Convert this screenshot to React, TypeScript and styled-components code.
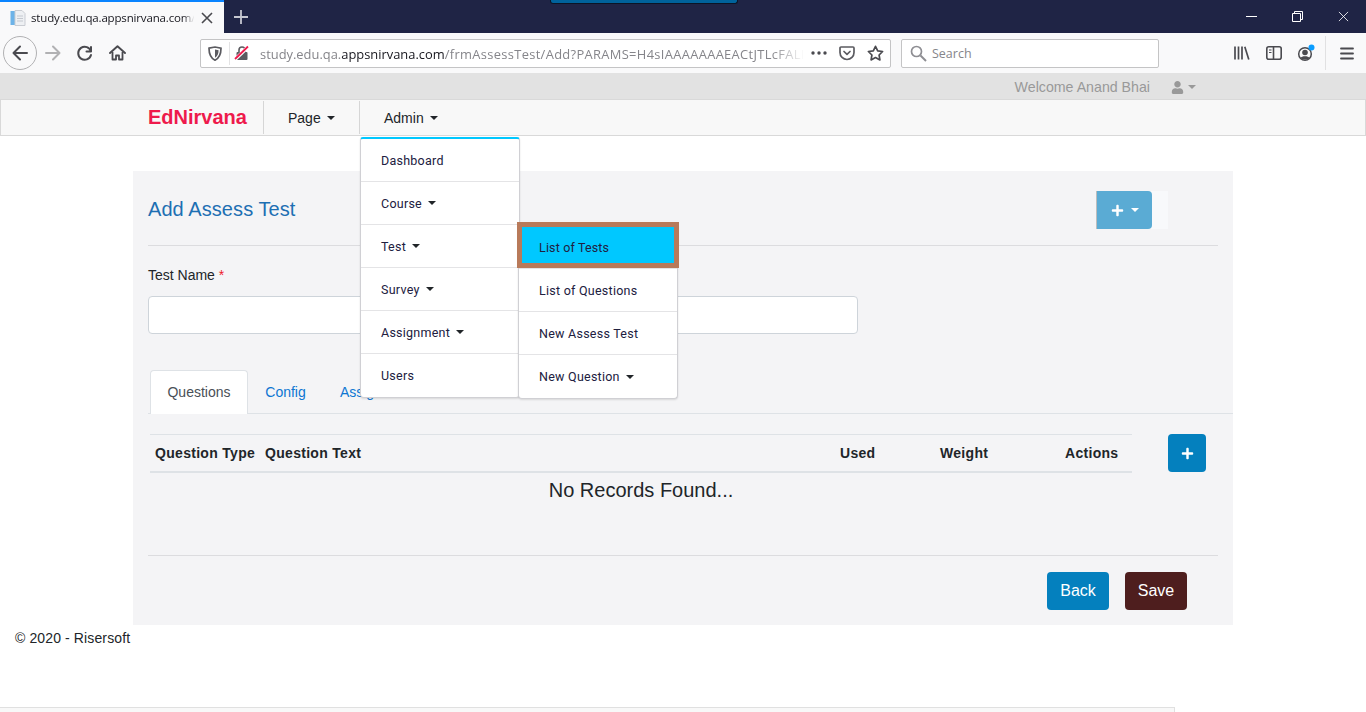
import React from 'react'
import styled, { createGlobalStyle } from 'styled-components'
import { FaPlus, FaUser } from 'react-icons/fa'

const GlobalStyle = createGlobalStyle`
  html, body {
    margin: 0;
    padding: 0;
    background: #fff;
    overflow: hidden;
  }
  body {
    font-family: "Liberation Sans", Arial, sans-serif;
    font-size: 14px;
    color: #212529;
  }
  * {
    box-sizing: border-box;
  }
`

const Page = styled.div`
  width: 1366px;
  height: 712px;
  position: relative;
  overflow: hidden;
`

/* browser chrome */
const TabStrip = styled.div`
  height: 33px;
  background: #1f2445;
  display: flex;
  position: relative;
`

const ShareBar = styled.div`
  position: absolute;
  left: 550px;
  top: 0;
  width: 188px;
  height: 4px;
  background: #00629b;
  border: 1px solid #0b1526;
  border-top: 0;
  border-radius: 0 0 3px 3px;
`

const ActiveTab = styled.div`
  width: 224px;
  background: #f9f9fa;
  border-top: 2px solid #0a84ff;
  display: flex;
  align-items: center;
  padding-left: 10px;
  gap: 5px;
`

const TabTitle = styled.span`
  font-family: "Open Sans", sans-serif;
  font-size: 11.5px;
  letter-spacing: -0.16px;
  color: #16161d;
  width: 165px;
  white-space: nowrap;
  overflow: hidden;
  -webkit-mask-image: linear-gradient(90deg, #000 92%, transparent 99%);
  mask-image: linear-gradient(90deg, #000 92%, transparent 99%);
`

const NewTab = styled.div`
  width: 34px;
  display: flex;
  align-items: center;
  justify-content: center;
`

const WindowControls = styled.div`
  margin-left: auto;
  display: flex;
`

const WindowButton = styled.div`
  width: 46px;
  display: flex;
  align-items: center;
  justify-content: center;
`

const Toolbar = styled.div`
  height: 40px;
  background: #f9f9fa;
  display: flex;
  align-items: center;
  padding-left: 3px;
`

const BackCircle = styled.div`
  width: 34px;
  height: 34px;
  border: 1px solid #b1b1b3;
  border-radius: 50%;
  background: #f9f9fa;
  display: flex;
  align-items: center;
  justify-content: center;
`

const ToolButton = styled.div<{ $w?: number }>`
  width: ${(p) => p.$w ?? 32}px;
  height: 32px;
  display: flex;
  align-items: center;
  justify-content: center;
  flex: none;
`

const UrlBar = styled.div`
  width: 691px;
  height: 29px;
  margin-left: 67px;
  background: #fff;
  border: 1px solid #c4c4c5;
  border-radius: 2px;
  display: flex;
  align-items: center;
  flex: none;
`

const UrlDivider = styled.div`
  width: 1px;
  height: 23px;
  background: #e3e3e4;
`

const UrlText = styled.div`
  width: 546px;
  margin-left: 7px;
  padding-top: 1px;
  font-family: "Open Sans", sans-serif;
  font-size: 12.9px;
  white-space: nowrap;
  overflow: hidden;
  color: #85858a;
  -webkit-mask-image: linear-gradient(90deg, #000 94%, transparent);
  mask-image: linear-gradient(90deg, #000 94%, transparent);
`

const UrlHost = styled.span`
  color: #16161d;
`

const UrlPath = styled.span`
  letter-spacing: 0.33px;
`

const SearchBox = styled.div`
  width: 258px;
  height: 29px;
  margin-left: 10px;
  padding: 1px 0 0 8px;
  background: #fff;
  border: 1px solid #c4c4c5;
  border-radius: 2px;
  display: flex;
  align-items: center;
  gap: 5px;
  font-family: "Open Sans", sans-serif;
  font-size: 12.5px;
  color: #85858a;
  flex: none;
`

const ToolGroup = styled.div`
  margin-left: 67px;
  display: flex;
  align-items: center;
`

const ToolDivider = styled.div`
  width: 1px;
  height: 34px;
  background: #e1e1e2;
  margin: 0 5px 0 3px;
`

/* app header */
const WelcomeStrip = styled.div`
  height: 26px;
  padding: 2px 170px 0 0;
  background: #e2e2e2;
  display: flex;
  align-items: center;
  justify-content: flex-end;
  color: #999;
  font-size: 14.2px;
`

const UserMenu = styled.div`
  margin-left: 21px;
  display: flex;
  align-items: center;
  gap: 4px;
  width: 25px;
`

const SmallCaret = styled.span<{ $color?: string }>`
  display: inline-block;
  width: 0;
  height: 0;
  border-left: 4px solid transparent;
  border-right: 4px solid transparent;
  border-top: 4px solid ${(p) => p.$color ?? '#212529'};
`

const Navbar = styled.div`
  height: 37px;
  background: #f8f8f8;
  border: 1px solid #d9d9d9;
  display: flex;
  align-items: stretch;
  padding-left: 147px;
  position: relative;
  z-index: 5;
`

const Brand = styled.div`
  width: 116px;
  display: flex;
  align-items: center;
  font-size: 20px;
  font-weight: 700;
  color: #ee1a4c;
  border-right: 1px solid #d6d6d6;
  margin: 1px 0;
`

const NavItem = styled.div<{ $w: number; $divider?: boolean }>`
  width: ${(p) => p.$w}px;
  padding-left: 24px;
  display: flex;
  align-items: center;
  gap: 6px;
  font-size: 14px;
  color: #212529;
  margin: 1px 0;
  border-right: ${(p) => (p.$divider ? '1px solid #d6d6d6' : 'none')};
`

/* menus */
const Menu = styled.div<{ $left: number; $top: number; $accent?: boolean }>`
  position: absolute;
  left: ${(p) => p.$left}px;
  top: ${(p) => p.$top}px;
  width: 160px;
  background: #fff;
  border: 1px solid #d0d0d4;
  border-top: ${(p) => (p.$accent ? '2px solid #00c8ff' : '1px solid #e4e4e6')};
  border-radius: ${(p) => (p.$accent ? '3px 3px 4px 4px' : '0 0 4px 4px')};
  box-shadow: 0 1px 2px rgba(0, 0, 0, 0.12);
  z-index: ${(p) => (p.$accent ? 6 : 7)};
`

const MenuItem = styled.div<{ $last?: boolean }>`
  height: 43px;
  padding-left: 20px;
  display: flex;
  align-items: center;
  gap: 6px;
  font-family: Roboto, sans-serif;
  font-size: 12.5px;
  letter-spacing: 0.25px;
  color: #212040;
  border-bottom: ${(p) => (p.$last ? 'none' : '1px solid #e4e4e6')};
`

const HighlightItem = styled.div`
  position: absolute;
  left: -2px;
  top: -4px;
  width: 162px;
  height: 46px;
  padding: 4px 0 0 17px;
  display: flex;
  align-items: center;
  background: #00c8ff;
  border: 5px solid #b87a5a;
  font-family: Roboto, sans-serif;
  font-size: 12.5px;
  letter-spacing: 0.15px;
  color: #212040;
`

/* page */
const Main = styled.main`
  margin: 35px 0 0 133px;
  width: 1100px;
  height: 454px;
  background: #f4f4f6;
  padding-left: 15px;
  display: flex;
  flex-direction: column;
`

const CardHeader = styled.div`
  width: 1070px;
  height: 75px;
  border-bottom: 1px solid #dcdcdf;
  display: flex;
  align-items: flex-start;
  justify-content: space-between;
`

const Title = styled.h2`
  margin: 25px 0 0;
  font-size: 20px;
  line-height: 26px;
  letter-spacing: 0.07px;
  font-weight: 400;
  color: #1d6fb3;
`

const AddGroup = styled.div`
  margin: 20px 50px 0 0;
  width: 72px;
  height: 38px;
  background: #f8f9fb;
`

const AddDropdown = styled.button`
  width: 56px;
  height: 38px;
  padding: 0 0 0 14px;
  background: #5aabd4;
  border: 0;
  border-left: 1px solid #bdbdbd;
  border-radius: 0 4px 4px 0;
  display: flex;
  align-items: center;
  gap: 7px;
  color: #fff;
`

const Label = styled.label`
  display: block;
  margin-top: 21px;
  height: 16px;
  line-height: 16px;
  font-size: 14px;
  color: #212529;
`

const Required = styled.span`
  color: #ee1a2c;
`

const TextInput = styled.input`
  display: block;
  margin-top: 13px;
  width: 710px;
  height: 38px;
  background: #fff;
  border: 1px solid #ced4da;
  border-radius: 4px;
`

const Tabs = styled.div`
  margin: 36px 0 0;
  width: 1085px;
  height: 44px;
  padding-left: 2px;
  display: flex;
  border-bottom: 1px solid #dee2e6;
`

const Tab = styled.div<{ $active?: boolean; $w: number }>`
  width: ${(p) => p.$w}px;
  height: 44px;
  padding-bottom: 2px;
  display: flex;
  align-items: center;
  justify-content: center;
  font-size: 14px;
  color: ${(p) => (p.$active ? '#495057' : '#0d76d2')};
  background: ${(p) => (p.$active ? '#fff' : 'transparent')};
  border: 1px solid ${(p) => (p.$active ? '#dee2e6' : 'transparent')};
  border-bottom: 0;
  border-radius: 4px 4px 0 0;
`

const TableRow = styled.div`
  margin-top: 20px;
  display: flex;
  align-items: flex-start;
  padding-left: 2px;
`

const TableBox = styled.div`
  width: 982px;
`

const HeadRow = styled.div`
  height: 39px;
  border-top: 1px solid #dee2e6;
  border-bottom: 2px solid #dee2e6;
  display: grid;
  grid-template-columns: 110px 575px 100px 125px 1fr;
  align-items: center;
  padding-left: 5px;
  font-size: 14px;
  font-weight: 700;
  letter-spacing: 0.3px;
  color: #212529;
`

const EmptyText = styled.div`
  margin-top: 5px;
  width: 982px;
  text-align: center;
  font-size: 20px;
  line-height: 24px;
  color: #212529;
`

const IconButton = styled.button`
  margin-left: 36px;
  width: 38px;
  height: 38px;
  padding: 0;
  background: #0480be;
  border: 0;
  border-radius: 4px;
  color: #fff;
  display: flex;
  align-items: center;
  justify-content: center;
`

const CardFooter = styled.div`
  width: 1070px;
  margin-top: 53px;
  border-top: 1px solid #dcdcdf;
  padding: 16px 31px 0 0;
  display: flex;
  justify-content: flex-end;
  gap: 16px;
`

const ActionButton = styled.button<{ $bg: string }>`
  width: 62px;
  height: 38px;
  padding: 0;
  border: 0;
  border-radius: 4px;
  background: ${(p) => p.$bg};
  color: #fff;
  font-family: "Liberation Sans", Arial, sans-serif;
  font-size: 16px;
`

const Footer = styled.footer`
  padding: 5px 0 0 15px;
  line-height: 16px;
  font-size: 14px;
  letter-spacing: 0.12px;
  color: #212529;
`

const BottomPanel = styled.div`
  position: absolute;
  left: 0;
  bottom: 0;
  width: 1175px;
  height: 5px;
  background: #f8f8f8;
  border-top: 1px solid #e0e0e0;
  border-right: 1px solid #e0e0e0;
`

const Favicon = () => (
  <svg width="16" height="16" viewBox="0 0 16 16">
    <rect x="0.5" y="1" width="5" height="14" fill="#6db3e8" />
    <path d="M5 0.5h7l3 3v12H5z" fill="#eef0f3" stroke="#c9ccd2" />
    <path d="M7 6h6M7 8.5h6M7 11h6" stroke="#c4c8cf" />
  </svg>
)

const CloseIcon = ({ color = '#4a4a4f', size = 12, width = 1.6 }: { color?: string; size?: number; width?: number }) => (
  <svg width={size} height={size} viewBox="0 0 12 12">
    <path d="M1 1l10 10M11 1L1 11" stroke={color} strokeWidth={width} fill="none" />
  </svg>
)

const Stroke = ({ d, color = '#4a4a4f', w = 2 }: { d: string; color?: string; w?: number }) => (
  <svg width="18" height="18" viewBox="0 0 18 18" fill="none">
    <path d={d} stroke={color} strokeWidth={w} strokeLinecap="round" strokeLinejoin="round" />
  </svg>
)

const ShieldIcon = () => (
  <svg width="14" height="15" viewBox="0 0 14 15" fill="none">
    <path d="M1 2.2L7 1l6 1.2c0 5.5-1 9.5-6 12C2 11.7 1 7.7 1 2.2z" stroke="#5b5b60" strokeWidth="1.7" />
    <path d="M7 3.5l3.6.8C10.500 7.600 9.800 10 7 11.700z" fill="#5b5b60" />
  </svg>
)

const InsecureLock = () => (
  <svg width="16" height="16" viewBox="0 0 16 16">
    <path d="M5 7V5a3 3 0 0 1 6 0v2" stroke="#5b5b60" strokeWidth="1.6" fill="none" />
    <rect x="2.5" y="7" width="11" height="8" rx="1" fill="#5b5b60" />
    <path d="M1 14.5L14 2" stroke="#fff" strokeWidth="3.4" />
    <path d="M1 14L14 1.5" stroke="#ee1a4c" strokeWidth="1.8" />
  </svg>
)

const PocketIcon = () => (
  <svg width="16" height="15" viewBox="0 0 16 15" fill="none">
    <path d="M2 1h12a1 1 0 0 1 1 1v4.5a7 7 0 0 1-14 0V2a1 1 0 0 1 1-1z" stroke="#5b5b60" strokeWidth="1.7" />
    <path d="M5 5.5l3 2.8 3-2.8" stroke="#5b5b60" strokeWidth="1.7" strokeLinecap="round" strokeLinejoin="round" />
  </svg>
)

const LibraryIcon = () => (
  <svg width="16" height="14" viewBox="0 0 16 14">
    <path d="M1 0.5v13M4.5 0.5v13M8 0.5v13" stroke="#4a4a4f" strokeWidth="1.7" />
    <path d="M10.8 0.8l4 12.6" stroke="#4a4a4f" strokeWidth="1.7" />
  </svg>
)

const SidebarIcon = () => (
  <svg width="16" height="14" viewBox="0 0 16 14" fill="none">
    <rect x="0.8" y="0.8" width="14.4" height="12.4" rx="2" stroke="#4a4a4f" strokeWidth="1.6" />
    <path d="M7.5 1v12" stroke="#4a4a4f" strokeWidth="1.6" />
    <path d="M3 4h2.5M3 6.5h2.5" stroke="#4a4a4f" strokeWidth="1.2" />
  </svg>
)

const AccountIcon = () => (
  <svg width="20" height="20" viewBox="0 0 20 20" fill="none">
    <circle cx="9" cy="11" r="6.3" stroke="#4a4a4f" strokeWidth="1.5" />
    <circle cx="9" cy="9.5" r="2.8" fill="#4a4a4f" />
    <path d="M4.5 15c1-2.5 8-2.5 9 0-2 2-7 2-9 0z" fill="#4a4a4f" />
    <circle cx="15.5" cy="4.5" r="3" fill="#0a9dff" />
  </svg>
)

const SearchIcon = () => (
  <svg width="17" height="17" viewBox="0 0 17 17" fill="none">
    <circle cx="6.5" cy="6.5" r="5" stroke="#8e8e93" strokeWidth="1.7" />
    <path d="M10.5 10.5l5.5 5.5" stroke="#8e8e93" strokeWidth="2" />
  </svg>
)

const HomeIcon = () => (
  <svg width="17" height="16" viewBox="0 0 17 16" fill="none">
    <path d="M1 8l7.5-6.8L16 8" stroke="#4a4a4f" strokeWidth="1.9" strokeLinecap="round" strokeLinejoin="round" />
    <path d="M3.5 7v7.5H7v-4h3v4h3.5V7" stroke="#4a4a4f" strokeWidth="1.8" strokeLinejoin="round" />
  </svg>
)

const StarIcon = () => (
  <svg width="17" height="16" viewBox="0 0 17 16" fill="none">
    <path
      d="M8.5 1.3l2.2 4.5 4.9.7-3.5 3.5.8 4.9-4.4-2.3-4.4 2.3.8-4.9L1.4 6.5l4.9-.7z"
      stroke="#4a4a4f"
      strokeWidth="1.7"
      strokeLinejoin="round"
    />
  </svg>
)

export default function App() {
  return (
    <Page>
      <GlobalStyle />
      <TabStrip>
        <ShareBar />
        <ActiveTab>
          <Favicon />
          <TabTitle>study.edu.qa.appsnirvana.com/</TabTitle>
          <CloseIcon />
        </ActiveTab>
        <NewTab>
          <svg width="14" height="14" viewBox="0 0 14 14">
            <path d="M7 0v14M0 7h14" stroke="#c5c7d0" strokeWidth="1.8" />
          </svg>
        </NewTab>
        <WindowControls>
          <WindowButton>
            <svg width="11" height="11" viewBox="0 0 11 11">
              <path d="M0 5.5h11" stroke="#fff" />
            </svg>
          </WindowButton>
          <WindowButton>
            <svg width="11" height="11" viewBox="0 0 11 11" fill="none">
              <path d="M.5 2.5h8v8h-8zM2.5 2.5v-2h8v8h-2" stroke="#fff" />
            </svg>
          </WindowButton>
          <WindowButton>
            <CloseIcon color="#fff" size={11} width={0.9} />
          </WindowButton>
        </WindowControls>
      </TabStrip>

      <Toolbar>
        <BackCircle>
          <Stroke d="M16 9H2.5M9 2.5L2.5 9 9 15.5" />
        </BackCircle>
        <ToolButton>
          <Stroke d="M2 9h13.5M9 2.5L15.5 9 9 15.5" color="#b1b1b3" />
        </ToolButton>
        <ToolButton>
          <Stroke d="M15 3v4.5h-4.5M15 7.5A6.5 6.5 0 1 0 15 11" />
        </ToolButton>
        <ToolButton>
          <HomeIcon />
        </ToolButton>
        <UrlBar>
          <ToolButton $w={28}>
            <ShieldIcon />
          </ToolButton>
          <UrlDivider />
          <ToolButton $w={23}>
            <InsecureLock />
          </ToolButton>
          <UrlText>
            study.edu.qa.<UrlHost>appsnirvana.com</UrlHost>
            <UrlPath>/frmAssessTest/Add?PARAMS=H4sIAAAAAAAEACtJTLcFALI</UrlPath>
          </UrlText>
          <ToolButton $w={30}>
            <svg width="16" height="4" viewBox="0 0 16 4" fill="#4a4a4f">
              <circle cx="2" cy="2" r="1.7" />
              <circle cx="8" cy="2" r="1.7" />
              <circle cx="14" cy="2" r="1.7" />
            </svg>
          </ToolButton>
          <ToolButton $w={26}>
            <PocketIcon />
          </ToolButton>
          <ToolButton $w={30}>
            <StarIcon />
          </ToolButton>
        </UrlBar>
        <SearchBox>
          <SearchIcon />
          Search
        </SearchBox>
        <ToolGroup>
          <ToolButton>
            <LibraryIcon />
          </ToolButton>
          <ToolButton>
            <SidebarIcon />
          </ToolButton>
          <ToolButton>
            <AccountIcon />
          </ToolButton>
          <ToolDivider />
          <ToolButton>
            <svg width="14" height="13" viewBox="0 0 14 13">
              <path d="M1 1.5h12M1 6.5h12M1 11.5h12" stroke="#4a4a4f" strokeWidth="1.8" strokeLinecap="round" />
            </svg>
          </ToolButton>
        </ToolGroup>
      </Toolbar>

      <WelcomeStrip>
        Welcome Anand Bhai
        <UserMenu>
          <FaUser size={13} color="#999" />
          <SmallCaret $color="#999" />
        </UserMenu>
      </WelcomeStrip>

      <Navbar>
        <Brand>EdNirvana</Brand>
        <NavItem $w={96} $divider>
          Page <SmallCaret />
        </NavItem>
        <NavItem $w={120}>
          Admin <SmallCaret />
        </NavItem>
        <Menu $left={359} $top={37} $accent>
          <MenuItem>Dashboard</MenuItem>
          <MenuItem>
            Course <SmallCaret />
          </MenuItem>
          <MenuItem>
            Test <SmallCaret />
          </MenuItem>
          <MenuItem>
            Survey <SmallCaret />
          </MenuItem>
          <MenuItem>
            Assignment <SmallCaret />
          </MenuItem>
          <MenuItem $last>Users</MenuItem>
        </Menu>
        <Menu $left={517} $top={125}>
          <HighlightItem>List of Tests</HighlightItem>
          <MenuItem />
          <MenuItem>List of Questions</MenuItem>
          <MenuItem>New Assess Test</MenuItem>
          <MenuItem $last>
            New Question <SmallCaret />
          </MenuItem>
        </Menu>
      </Navbar>

      <Main>
        <CardHeader>
          <Title>Add Assess Test</Title>
          <AddGroup>
            <AddDropdown>
              <FaPlus size={13} />
              <SmallCaret $color="#fff" />
            </AddDropdown>
          </AddGroup>
        </CardHeader>
        <Label>
          Test Name <Required>*</Required>
        </Label>
        <TextInput />
        <Tabs>
          <Tab $active $w={98}>
            Questions
          </Tab>
          <Tab $w={75}>Config</Tab>
          <Tab $w={114}>Assignments</Tab>
        </Tabs>
        <TableRow>
          <TableBox>
            <HeadRow>
              <span>Question Type</span>
              <span>Question Text</span>
              <span>Used</span>
              <span>Weight</span>
              <span>Actions</span>
            </HeadRow>
            <EmptyText>No Records Found...</EmptyText>
          </TableBox>
          <IconButton>
            <FaPlus size={13} />
          </IconButton>
        </TableRow>
        <CardFooter>
          <ActionButton $bg="#0480be">Back</ActionButton>
          <ActionButton $bg="#4e1e1e">Save</ActionButton>
        </CardFooter>
      </Main>
      <Footer>© 2020 - Risersoft</Footer>
      <BottomPanel />
    </Page>
  )
}
